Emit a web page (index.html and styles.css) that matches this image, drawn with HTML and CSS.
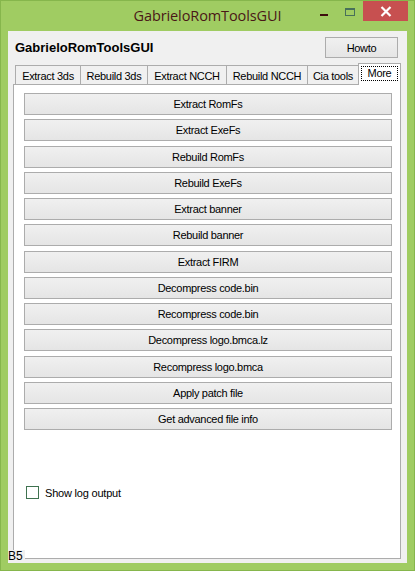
FILE: index.html
```html
<!DOCTYPE html>
<html>
<head>
<meta charset="utf-8">
<link rel="stylesheet" href="styles.css">
</head>
<body>
<div class="window">
  <div class="titlebar">
    <div class="title">GabrieloRomToolsGUI</div>
    <div class="controls">
      <div class="ctl min"><span class="dash"></span></div>
      <div class="ctl max"><span class="box"></span></div>
      <div class="ctl close">
        <svg width="12" height="11" viewBox="0 0 12 11"><path d="M1.5 1 L10.5 10 M10.5 1 L1.5 10" stroke="#fff" stroke-width="2.2" fill="none"/></svg>
      </div>
    </div>
  </div>
  <div class="client">
    <div class="header">
      <div class="apptitle">GabrieloRomToolsGUI</div>
      <button class="btn howto">Howto</button>
    </div>
    <div class="tabs">
      <div class="tab w1">Extract 3ds</div>
      <div class="tab w2">Rebuild 3ds</div>
      <div class="tab w3">Extract NCCH</div>
      <div class="tab w4">Rebuild NCCH</div>
      <div class="tab w5">Cia tools</div>
      <div class="tab sel"><span class="focus">More</span></div>
    </div>
    <div class="panel">
      <div class="buttons">
        <button class="btn wide">Extract RomFs</button>
        <button class="btn wide">Extract ExeFs</button>
        <button class="btn wide">Rebuild RomFs</button>
        <button class="btn wide">Rebuild ExeFs</button>
        <button class="btn wide">Extract banner</button>
        <button class="btn wide">Rebuild banner</button>
        <button class="btn wide">Extract FIRM</button>
        <button class="btn wide">Decompress code.bin</button>
        <button class="btn wide">Recompress code.bin</button>
        <button class="btn wide">Decompress logo.bmca.lz</button>
        <button class="btn wide">Recompress logo.bmca</button>
        <button class="btn wide">Apply patch file</button>
        <button class="btn wide">Get advanced file info</button>
      </div>
      <label class="check"><span class="cbox"></span><span class="ctext">Show log output</span></label>
    </div>
    <div class="status">B5</div>
  </div>
</div>
</body>
</html>
```
FILE: styles.css
```css
* { box-sizing: border-box; }
html, body { margin: 0; padding: 0; }
body {
  width: 415px;
  height: 571px;
  overflow: hidden;
  font-family: "Liberation Sans", Arial, sans-serif;
}
.window {
  width: 415px;
  height: 571px;
  background: #a0cc62;
  border: 1px solid #86b64c;
  display: flex;
  flex-direction: column;
  padding: 0 7px 7px 7px;
}
.titlebar {
  height: 30px;
  display: flex;
  position: relative;
  justify-content: center;
  align-items: flex-start;
}
.title {
  font-family: "Open Sans", sans-serif;
  font-size: 14.5px;
  color: #4a1717;
  padding-top: 5px;
  letter-spacing: -0.1px;
}
.controls {
  position: absolute;
  right: -7px;
  top: 0;
  display: flex;
  align-items: flex-start;
}
.ctl {
  height: 20px;
  display: flex;
  align-items: center;
  justify-content: center;
}
.min { width: 26px; }
.dash { width: 8px; height: 2px; background: #3d0e0e; margin-top: 7px; }
.max { width: 26px; }
.box { width: 10px; height: 8px; border: 1px solid #48705a; border-top-width: 2px; margin-top: 1px; }
.close { width: 45px; background: #c75050; margin-right: 6px; }
.close svg { display: block; }
.client {
  flex: 1;
  background: #f0f0f0;
  position: relative;
  padding: 0 6px 4px 5px;
  display: flex;
  flex-direction: column;
}
.header {
  height: 33px;
  display: flex;
  justify-content: space-between;
  align-items: flex-start;
  padding: 6px 2px 0 2px;
}
.apptitle {
  font-weight: bold;
  font-size: 13px;
  padding-top: 3px;
  color: #000;
}
.btn {
  font-family: "Liberation Sans", Arial, sans-serif;
  font-size: 11px;
  letter-spacing: -0.3px;
  color: #000;
  border: 1px solid #acacac;
  background: linear-gradient(#f0f0f0, #e5e5e5);
  padding: 0;
  margin: 0;
}
.howto {
  width: 73px;
  height: 21px;
  margin-right: 1px;
}
.tabs {
  display: flex;
  align-items: flex-end;
  height: 20px;
  padding-left: 2px;
  position: relative;
  z-index: 1;
}
.tab {
  height: 19px;
  border: 1px solid #acacac;
  border-bottom: none;
  background: #f0f0f0;
  font-size: 11px;
  letter-spacing: -0.3px;
  display: flex;
  align-items: center;
  justify-content: center;
  margin-right: -1px;
  padding-top: 1px;
}
.w1 { width: 66px; }
.w2 { width: 68px; }
.w3 { width: 80px; }
.w4 { width: 82px; }
.w5 { width: 52px; }
.tab.sel {
  width: 43px;
  height: 22px;
  background: #fff;
  margin-bottom: -1px;
  align-items: flex-start;
  padding: 2px 2px 0 2px;
  margin-right: 0;
}
.focus {
  display: block;
  width: 100%;
  height: 15px;
  border: 1px dotted #000;
  text-align: center;
  line-height: 12px;
  color: #000;
}
.panel {
  flex: 1;
  background: #fff;
  border: 1px solid #acacac;
  padding: 8px 8px 0 10px;
  display: flex;
  flex-direction: column;
}
.buttons {
  display: flex;
  flex-direction: column;
  gap: 4.25px;
}
.wide {
  height: 22px;
  width: 100%;
}
.check {
  display: flex;
  align-items: center;
  margin-top: 56px;
  margin-left: 2px;
  font-size: 11px;
}
.cbox {
  width: 13px;
  height: 13px;
  border: 1px solid #3f7250;
  background: #fff;
  margin-right: 6px;
}
.ctext { letter-spacing: -0.2px; color: #000; }
.status {
  position: absolute;
  left: 0;
  bottom: 0;
  width: 17px;
  height: 13px;
  background: #f0f0f0;
  font-size: 12px;
  line-height: 13px;
}
```
